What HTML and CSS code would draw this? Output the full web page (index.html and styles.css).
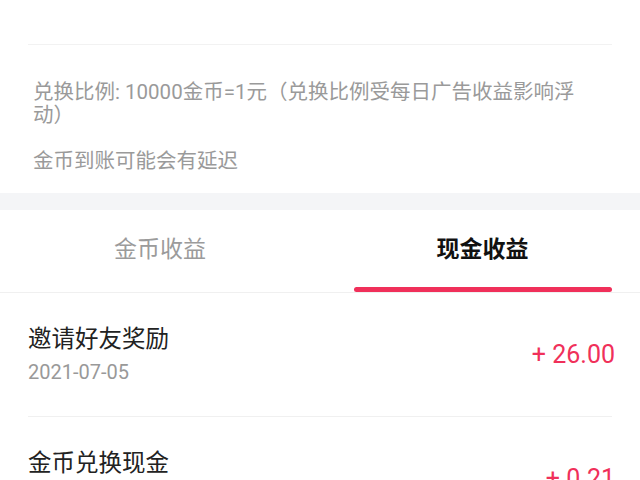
FILE: index.html
```html
<!DOCTYPE html>
<html lang="zh-CN">
<head>
<meta charset="utf-8">
<link rel="stylesheet" href="styles.css">
</head>
<body>
<div class="page">
  <section class="notice">
    <div class="notice-top"></div>
    <div class="notice-body">
      <p class="notice-text">兑换比例: 10000金币=1元（兑换比例受每日广告收益影响浮动）</p>
      <p class="notice-text">金币到账可能会有延迟</p>
    </div>
  </section>
  <div class="band"></div>
  <nav class="tabs">
    <div class="tab">
      <span class="tab-label">金币收益</span>
      <span class="tab-bar"></span>
    </div>
    <div class="tab tab-active">
      <span class="tab-label">现金收益</span>
      <span class="tab-bar"></span>
    </div>
  </nav>
  <ul class="records">
    <li class="record">
      <div class="record-info">
        <div class="record-title">邀请好友奖励</div>
        <div class="record-date">2021-07-05</div>
      </div>
      <div class="record-amount">+ 26.00</div>
    </li>
    <li class="record">
      <div class="record-info">
        <div class="record-title">金币兑换现金</div>
        <div class="record-date">2021-07-05</div>
      </div>
      <div class="record-amount">+ 0.21</div>
    </li>
  </ul>
</div>
</body>
</html>
```
FILE: styles.css
```css
html, body {
  margin: 0;
  padding: 0;
  background: #ffffff;
}
body {
  font-family: Roboto, "Noto Sans CJK SC", sans-serif;
  width: 640px;
  height: 480px;
  overflow: hidden;
}
.page {
  display: flex;
  flex-direction: column;
}
.notice {
  padding: 0 28px;
}
.notice-top {
  height: 44px;
  border-bottom: 1px solid #f2f2f2;
}
.notice-body {
  padding: 36px 22px 20px 5px;
  display: flex;
  flex-direction: column;
  gap: 23px;
}
.notice-text {
  margin: 0;
  font-size: 20.5px;
  line-height: 23px;
  color: #9a9a9a;
}
.band {
  height: 17px;
  background: #f4f5f7;
}
.tabs {
  display: grid;
  grid-template-columns: 1fr 1fr;
  border-bottom: 1px solid #f0f0f0;
}
.tab {
  display: flex;
  flex-direction: column;
  align-items: center;
  padding-top: 25px;
}
.tab-active {
  padding-left: 5px;
}
.tab-label {
  font-size: 23px;
  line-height: 30px;
  color: #9b9b9b;
}
.tab-bar {
  width: 258px;
  height: 5px;
  margin-top: 22px;
  border-radius: 3px;
  background: transparent;
}
.tab-active .tab-label {
  color: #111111;
  font-weight: 700;
}
.tab-active .tab-bar {
  background: #f0305a;
}
.records {
  list-style: none;
  margin: 0;
  padding: 0 28px;
}
.record {
  display: flex;
  justify-content: space-between;
  align-items: center;
  padding: 31px 0 30px;
  border-bottom: 1px solid #f0f0f0;
}
.record-info {
  display: flex;
  flex-direction: column;
}
.record-title {
  font-size: 23.5px;
  line-height: 30px;
  color: #222222;
}
.record-date {
  margin-top: 4px;
  font-size: 20px;
  line-height: 28px;
  color: #999999;
}
.record-amount {
  margin-right: -3px;
  font-size: 25px;
  line-height: 30px;
  color: #f0305a;
}
```
